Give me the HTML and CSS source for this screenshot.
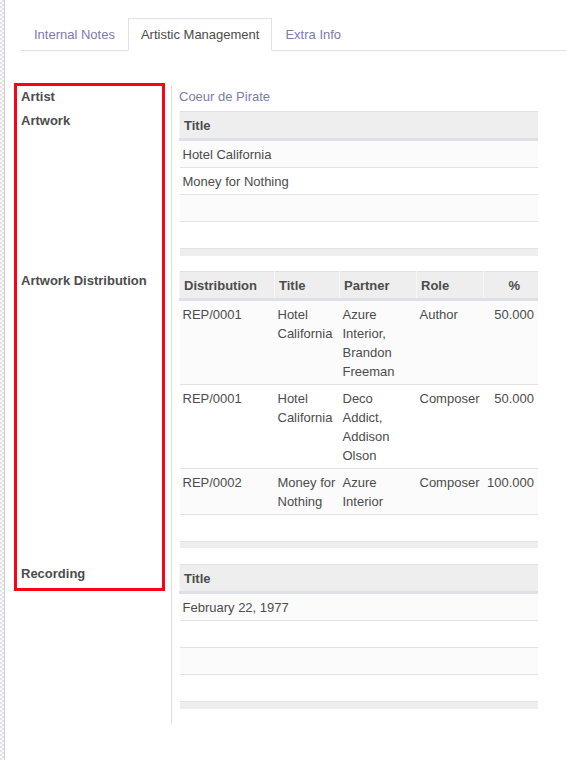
FILE: index.html
```html
<!DOCTYPE html>
<html lang="en">
<head>
<meta charset="utf-8">
<title>Artistic Management</title>
<link rel="stylesheet" href="styles.css">
</head>
<body>
<div class="page">
  <div class="strip"></div>
  <main class="main">
    <ul class="tabs">
      <li class="tab">Internal Notes</li>
      <li class="tab active">Artistic Management</li>
      <li class="tab">Extra Info</li>
    </ul>

    <div class="form">
      <div class="highlight"></div>

      <div class="label label-short">Artist</div>
      <div class="field field-short"><a class="link">Coeur de Pirate</a></div>

      <div class="label">Artwork</div>
      <div class="field">
        <table class="list">
          <thead><tr><th>Title</th></tr></thead>
          <tbody>
            <tr><td>Hotel California</td></tr>
            <tr><td>Money for Nothing</td></tr>
            <tr><td>&nbsp;</td></tr>
            <tr><td>&nbsp;</td></tr>
          </tbody>
          <tfoot><tr><td></td></tr></tfoot>
        </table>
      </div>

      <div class="label">Artwork Distribution</div>
      <div class="field">
        <table class="list list-dist">
          <colgroup>
            <col class="c-dist"><col class="c-title"><col class="c-partner"><col class="c-role"><col>
          </colgroup>
          <thead>
            <tr><th>Distribution</th><th>Title</th><th>Partner</th><th>Role</th><th class="num-h">%</th></tr>
          </thead>
          <tbody>
            <tr><td>REP/0001</td><td>Hotel California</td><td>Azure Interior, Brandon Freeman</td><td class="nowrap">Author</td><td class="num">50.000</td></tr>
            <tr><td>REP/0001</td><td>Hotel California</td><td>Deco Addict, Addison Olson</td><td class="nowrap">Composer</td><td class="num">50.000</td></tr>
            <tr><td>REP/0002</td><td>Money&nbsp;for Nothing</td><td>Azure Interior</td><td class="nowrap">Composer</td><td class="num">100.000</td></tr>
            <tr><td>&nbsp;</td><td></td><td></td><td></td><td></td></tr>
          </tbody>
          <tfoot><tr><td colspan="5"></td></tr></tfoot>
        </table>
      </div>

      <div class="label">Recording</div>
      <div class="field field-last">
        <table class="list">
          <thead><tr><th>Title</th></tr></thead>
          <tbody>
            <tr><td>February 22, 1977</td></tr>
            <tr><td>&nbsp;</td></tr>
            <tr><td>&nbsp;</td></tr>
            <tr><td>&nbsp;</td></tr>
          </tbody>
          <tfoot><tr><td></td></tr></tfoot>
        </table>
      </div>
    </div>
  </main>
</div>
</body>
</html>
```
FILE: styles.css
```css
* { box-sizing: border-box; }

html, body {
  margin: 0;
  padding: 0;
  background: #ffffff;
}

body {
  font-family: "Liberation Sans", Arial, sans-serif;
  font-size: 13px;
  line-height: 19px;
  color: #4c4c4c;
}

.page {
  display: flex;
  min-height: 100vh;
}

.strip {
  flex: 0 0 5px;
  border-right: 1px solid #cfcfe4;
  background-color: #f6f6f6;
  background-image: conic-gradient(#e4e4e4 25%, #f8f8f8 0 50%, #e4e4e4 0 75%, #f8f8f8 0);
  background-size: 4px 4px;
}

.main {
  flex: 1;
  padding-left: 16px;
}

.tabs {
  list-style: none;
  margin: 18px 0 0 0;
  padding: 0;
  display: flex;
  border-bottom: 1px solid #dee2e6;
}

.tab {
  padding: 6px 12px;
  border: 1px solid transparent;
  border-bottom: 0;
  margin-bottom: -1px;
  color: #7c7bad;
  line-height: 19px;
  height: 33px;
}

.tab.active {
  color: #4c4c4c;
  background: #ffffff;
  border-color: #dee2e6;
  border-bottom: 1px solid #ffffff;
}

.form {
  position: relative;
  margin-top: 35px;
  display: grid;
  grid-template-columns: 150px 367px;
}

.highlight {
  position: absolute;
  left: -7px;
  top: -3px;
  width: 151px;
  height: 508px;
  border: 3px solid #ff0016;
  pointer-events: none;
}

.label {
  font-weight: bold;
  padding-right: 8px;
}

.label-short {
  padding-top: 1px;
}

.field {
  border-left: 1px solid #dddddd;
  padding-left: 7px;
}

.field-short {
  padding-top: 1px;
  padding-bottom: 5px;
}

.link {
  color: #7c7bad;
  text-decoration: none;
}

.list {
  width: 359px;
  border-collapse: collapse;
  table-layout: fixed;
  margin-bottom: 15px;
}

.list-dist {
  margin-bottom: 16px;
}

.field-last .list {
  margin-bottom: 15px;
}

.c-dist { width: 95px; }
.c-title { width: 65px; }
.c-partner { width: 77px; }
.c-role { width: 67px; }

.list thead tr {
  background: #eeeeee;
  border-top: 1px solid #dee2e6;
  border-bottom: 3px solid #dee2e6;
}

.list th {
  text-align: left;
  font-weight: bold;
  padding: 4px 4px 3px 4px;
  border-left: 1px solid #f7f7f7;
  line-height: 19px;
  height: 27px;
}

.list th.num-h {
  text-align: right;
  padding-right: 18px;
}

.list tbody tr {
  border-top: 1px solid #e2e2e2;
}

.list tbody tr:nth-child(odd) {
  background: #fbfbfb;
}

.list td {
  padding: 4px 3px 3px 3px;
  vertical-align: top;
  line-height: 19px;
}

.list td.num {
  text-align: right;
  padding-right: 4px;
}

.list td.nowrap {
  white-space: nowrap;
}

.list tfoot tr {
  border-top: 1px solid #e2e2e2;
  background: #eeeeee;
}

.list tfoot td {
  height: 7px;
  padding: 0;
  line-height: 0;
}
```
